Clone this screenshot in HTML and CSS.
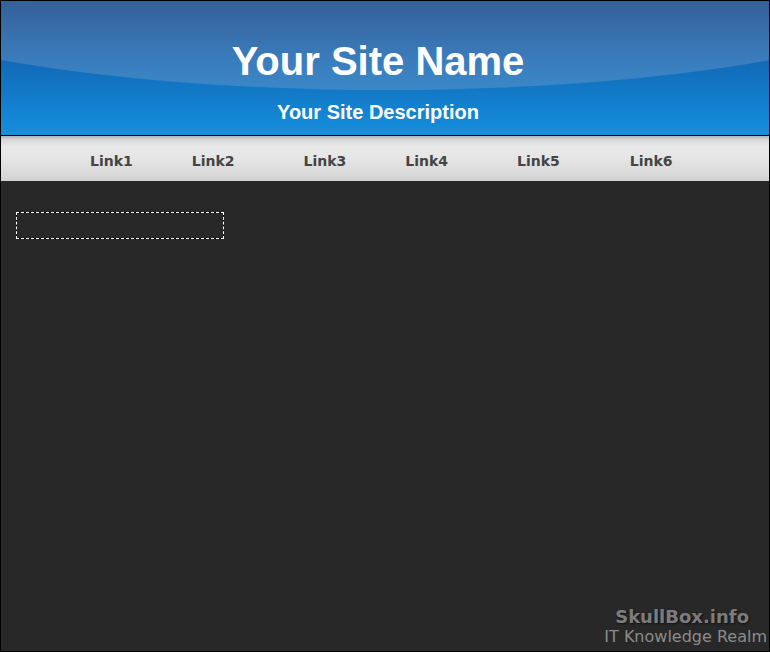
FILE: index.html
```html
<!DOCTYPE html>
<html lang="en">
<head>
  <meta charset="UTF-8">
  <title>Your Site Name</title>
  <link rel="stylesheet" href="styles.css">
</head>
<body>
  <div class="page">
    <div class="header">
      <h1>Your Site Name</h1>
      <h2>Your Site Description</h2>
    </div>
    <ul class="nav">
      <li><a href="#">Link1</a></li>
      <li><a href="#">Link2</a></li>
      <li><a href="#">Link3</a></li>
      <li><a href="#">Link4</a></li>
      <li><a href="#">Link5</a></li>
      <li><a href="#">Link6</a></li>
    </ul>
    <div class="content">
      <div class="box"></div>
    </div>
    <div class="brand">
      <div class="brand-name">SkullBox.info</div>
      <div class="brand-tag">IT Knowledge Realm</div>
    </div>
  </div>
</body>
</html>
```

FILE: styles.css
```css
body {
  margin: 0;
  padding: 0;
  background: #282828;
}

.page {
  width: 768px;
  height: 650px;
  border: 1px solid #000;
  background: #282828;
  position: relative;
  overflow: hidden;
}

.header {
  height: 135px;
  box-sizing: border-box;
  border-bottom: 1px solid #000;
  background: linear-gradient(to bottom, #1064b2 0px, #1167b5 55px, #158fdd 134px);
  position: relative;
  overflow: hidden;
  text-align: center;
  padding-right: 14px;
}

.header::before {
  content: "";
  position: absolute;
  left: -215px;
  top: -169px;
  width: 1200px;
  height: 258px;
  border-radius: 50%;
  background: linear-gradient(to bottom, #36609a 170px, #3a7bbb 225px, #3a88c8 258px);
}

.header h1,
.header h2 {
  position: relative;
  margin: 0;
  color: #fff;
  font-family: "Liberation Sans", Arial, sans-serif;
  font-weight: bold;
}

.header h1 {
  font-size: 40px;
  line-height: 46px;
  padding-top: 37px;
}

.header h2 {
  font-size: 20px;
  line-height: 24px;
  margin-top: 16px;
}

.nav {
  list-style: none;
  margin: 0;
  padding: 0 0 0 89px;
  height: 45px;
  display: flex;
  align-items: center;
  background: linear-gradient(to bottom, #b2b2b2 0px, #d8d8d8 4px, #e8e8e8 10px, #e6e6e6 22px, #d2d2d2 45px);
}

.nav li {
  margin-right: 59px;
}

.nav li:nth-child(2),
.nav li:nth-child(4) {
  margin-right: 69px;
}

.nav li:nth-child(5) {
  margin-right: 70px;
}

.nav a {
  font-family: "DejaVu Sans", Verdana, sans-serif;
  font-weight: bold;
  font-size: 14px;
  color: #444;
  text-decoration: none;
  display: block;
  padding-top: 5px;
}

.content {
  padding: 31px 15px;
}

.box {
  width: 208px;
  height: 27px;
  box-sizing: border-box;
  border: 1px dashed #fff;
  background: linear-gradient(#282828, #282828) padding-box, #000 border-box;
}

.brand {
  position: absolute;
  right: 2px;
  bottom: 5px;
  text-align: right;
  font-family: "DejaVu Sans", Verdana, sans-serif;
}

.brand-name {
  font-weight: bold;
  font-size: 18px;
  line-height: 21px;
  color: #7c7c7c;
  margin-right: 18px;
  text-shadow: 1px 1px 2px #111;
}

.brand-tag {
  font-size: 16px;
  line-height: 19px;
  color: #8c8c8c;
}
```
